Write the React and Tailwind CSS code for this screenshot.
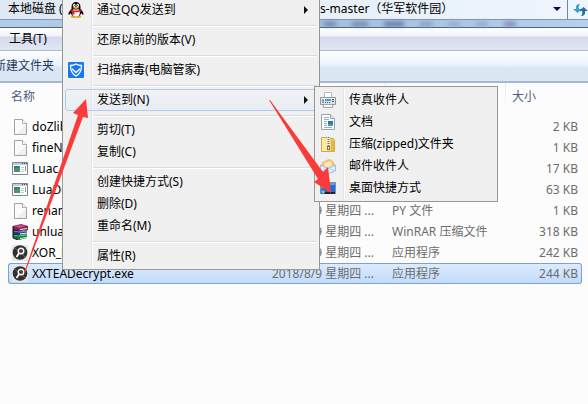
import React from 'react';

const files = [
  { name: 'doZlib', icon: 'blank', type: '文件', size: '2 KB' },
  { name: 'fineN', icon: 'blank', type: '文件', size: '1 KB' },
  { name: 'Luac', icon: 'window', type: '应用程序', size: '17 KB' },
  { name: 'LuaDec', icon: 'window', type: '应用程序', size: '63 KB' },
  { name: 'renam', icon: 'blank', type: 'PY 文件', size: '1 KB' },
  { name: 'unluac', icon: 'rar', type: 'WinRAR 压缩文件', size: '318 KB' },
  { name: 'XOR_D', icon: 'app', type: '应用程序', size: '242 KB' },
  { name: 'XXTEADecrypt.exe', icon: 'app', type: '应用程序', size: '244 KB', selected: true },
];

const menuGroups = [
  [{ label: '通过QQ发送到', icon: 'qq', sub: true }],
  [{ label: '还原以前的版本(V)' }],
  [{ label: '扫描病毒(电脑管家)', icon: 'shield' }],
  [{ label: '发送到(N)', sub: true, active: true }],
  [{ label: '剪切(T)' }, { label: '复制(C)' }],
  [{ label: '创建快捷方式(S)' }, { label: '删除(D)' }, { label: '重命名(M)' }],
  [{ label: '属性(R)' }],
];

const sendTo = [
  { label: '传真收件人', icon: 'fax' },
  { label: '文档', icon: 'doc' },
  { label: '压缩(zipped)文件夹', icon: 'zip' },
  { label: '邮件收件人', icon: 'mail' },
  { label: '桌面快捷方式', icon: 'desktop' },
];

const drawings = {
  blank: (
    <>
      <path d="M2.500 .5h8l4 4v11h-12z" fill="#fbfbfb" stroke="#a3a3a3" />
      <path d="M4 15h10V6z" fill="#efefef" />
      <path d="M10.500 .5v4h4" fill="#fff" stroke="#ababab" />
    </>
  ),
  window: (
    <>
      <path d="M.5 1.500h15v12H.5z" fill="#fff" stroke="#81878f" />
      <path d="M1 2h14v2H1z" fill="#c3ccd7" />
      <path d="M10 2h1v1h-1zM12 2h1v1h-1zM14 2h1v1h-1z" fill="#465060" />
      <path d="M2 5h6v6H2z" fill="#3f6f9a" />
      <path d="M2 8l6-2v5H2z" fill="#459866" />
      <path d="M9 6.500h3M9 8.500h3M9 10.500h3" stroke="#c3c9d0" />
      <path d="M13.500 5v5" stroke="#8d959e" />
    </>
  ),
  rar: (
    <>
      <path d="M1 2l8-2 7 2v4l-8 1-7-1z" fill="#8e1e53" />
      <path d="M2 2l7-1 5 1-7 2z" fill="#c25689" />
      <path d="M1 6l7 1 7-1v4l-7 1-7-1z" fill="#1c3d92" />
      <path d="M2 7l6 1 7-1" stroke="#6fa5df" fill="none" />
      <path d="M1 10l7 1 7-1v4l-8 2-6-2z" fill="#0e7647" />
      <path d="M2 11l6 1 7-1" stroke="#6acb8d" fill="none" />
      <path d="M8 5l7-1v1l-7 1zM8 9.500l7-1v1l-7 1zM8 14l7-1v1l-7 1z" fill="#f2eedc" />
      <path d="M1 2v12l5 2M1 6l6 1M1 10l6 1" stroke="#171717" fill="none" />
    </>
  ),
  app: (
    <>
      <path d="M0 0h16v16H0z" fill="#e8e8e8" />
      <circle cx="8" cy="7.500" r="7.300" fill="#303030" />
      <path d="M3 3l3 3M13 12l-3-3" stroke="#666" />
      <circle cx="9" cy="6" r="2.800" fill="#454545" stroke="#f8f8f8" strokeWidth="1.400" />
      <path d="M7 8.200L4.500 12" stroke="#fff" strokeWidth="1.800" />
    </>
  ),
  qq: (
    <>
      <ellipse cx="8" cy="14.500" rx="5.500" ry="1.500" fill="#efb42d" />
      <path d="M4 7C0 10 0 12 1 13l2-2M12 7c4 3 4 5 3 6l-2-2" fill="#111" />
      <ellipse cx="8" cy="9.500" rx="5.500" ry="5.300" fill="#111" />
      <ellipse cx="8" cy="10.500" rx="3.800" ry="4.200" fill="#fff" />
      <path d="M3.500 6C3-2 13-2 12.500 6c-1 2-8 2-9 0z" fill="#111" />
      <ellipse cx="6.300" cy="3.400" rx="1.300" ry="1.600" fill="#fff" />
      <ellipse cx="9.700" cy="3.400" rx="1.300" ry="1.600" fill="#fff" />
      <path d="M6.500 3h.8v1h-.8zM9 3h.8v1H9z" fill="#111" />
      <ellipse cx="8" cy="5.800" rx="2.800" ry="1" fill="#f3b52c" />
      <path d="M2.500 7c3 2 8 2 11 0v2c-3 1.500-5 1.500-7 1v2.500H4V9.500l-1.500-.7z" fill="#e81e2b" />
    </>
  ),
  shield: (
    <>
      <rect width="16" height="16" rx="1" fill="#1878f2" />
      <path d="M8 2c2 1.200 4 1.500 5.500 1.500C13.500 9 12 12 8 14 4 12 2.500 9 2.500 3.500 4 3.500 6 3.200 8 2z" fill="none" stroke="#fff" strokeWidth="1.300" />
      <path d="M4 6l4 3.500L12 6v1.700L8 11.500 4 7.700z" fill="#fff" />
    </>
  ),
  fax: (
    <>
      <path d="M4.500 .5h7V6h-7z" fill="#fff" stroke="#b5bbc1" />
      <path d="M.5 5.500h15v7H.5z" fill="#dbe2e8" stroke="#8d969e" />
      <path d="M1 6h14v1H1z" fill="#f5f8fa" />
      <path d="M2 7h2v4H2z" fill="#8f9aa4" />
      <path d="M5 7h6v2H5z" fill="#3c9fd8" />
      <path d="M12 7h2v1h-2zM12 9h2v1h-2zM5 10h1v1H5zM7 10h1v1H7zM9 10h1v1H9z" fill="#435462" />
      <path d="M3.500 12.500h9v3h-9z" fill="#fff" stroke="#9aa1a8" />
    </>
  ),
  doc: (
    <>
      <path d="M1.500 .5h9l4 4v11h-13z" fill="#fff" stroke="#9aa5af" />
      <path d="M10.500 .5v4h4" fill="#e2ebf1" stroke="#9aa5af" />
      <path d="M4 3.500h5M4 5.500h5M4 7.500h3M4 9.500h3M4 11.500h3M4 13.500h8" stroke="#8fb0c6" />
      <path d="M8 7h5v5H8z" fill="#2b78b8" />
      <path d="M8 10h5v2H8z" fill="#4d9c8e" />
    </>
  ),
  zip: (
    <>
      <path d="M1.500 1.500h6l1 1h5l1 2v11h-13z" fill="#f3d777" stroke="#cfa94a" />
      <path d="M2 2h5v13H2z" fill="#fae9a4" />
      <path d="M11 3l3 2v10h-3z" fill="#e3b94a" />
      <path d="M8.500 1v10" stroke="#fff6cf" strokeWidth="3" />
      <path d="M8.500 1v10" stroke="#77705c" strokeWidth="2" strokeDasharray="1 1" />
      <path d="M7 10h3v4H7z" fill="#7a7566" />
      <path d="M8 11h1v2H8z" fill="#f5eed6" />
    </>
  ),
  mail: (
    <>
      <path d="M1 6l7-5 7 5v8l-7 2-7-2z" fill="#b8d8ee" />
      <path d="M2 4l8-3 4 3v4l-6 3-6-3z" fill="#f5be6c" />
      <path d="M4 5l7-2 1 2v3l-4 2-4-2z" fill="#ffe7b4" />
      <path d="M.5 7L8 10.500 15.500 7v6L8 15.500.5 13z" fill="#dcefff" stroke="#9cc3dc" />
      <path d="M1 13l7-3 7 3" fill="none" stroke="#b5d4e9" />
    </>
  ),
  desktop: (
    <>
      <path d="M.5 2.500h15v11H.5z" fill="#2a6bd0" stroke="#7b8ea8" />
      <path d="M1 3h14v2C10 5 6 7 1 9z" fill="#5b9bea" />
      <path d="M1 12h14v2H1z" fill="#192638" />
      <circle cx="3" cy="12" r="2" fill="#4fa5df" />
      <path d="M2 12h2" stroke="#ebdd61" />
    </>
  ),
};

const Icon = ({ name }) => (
  <svg viewBox="0 0 16 16" className="w-4 h-4 shrink-0" aria-hidden="true">
    {drawings[name]}
  </svg>
);

const MenuItem = ({ item }) => (
  <button
    type="button"
    role="menuitem"
    className={`relative flex items-center gap-[13px] w-full h-[22px] text-left whitespace-nowrap ${
      item.active
        ? 'rounded-[3px] border border-[#aeccf0] bg-linear-to-b from-[#f0f2f5]/60 to-[#e4ebf6]/60 pl-[2px] pr-2'
        : 'pl-[3px] pr-[9px]'
    }`}
  >
    <span className="flex w-4 shrink-0">{item.icon && <Icon name={item.icon} />}</span>
    <span className="flex-1">{item.label}</span>
    {item.sub && (
      <svg viewBox="0 0 4 8" className="w-1 h-2" aria-hidden="true">
        <path d="M0 0l4 4-4 4z" fill="#111" />
      </svg>
    )}
  </button>
);

const ContextMenu = () => (
  <div role="menu" className="absolute -top-1 left-[62px] w-[258px] border border-[#979797] bg-[#f0f0f0] p-[2px]">
    <div className="absolute inset-y-[2px] left-[28px] w-[2px] border-l border-[#e2e3e3] bg-white" />
    {menuGroups.map((group, i) => (
      <React.Fragment key={i}>
        {i > 0 && (
          <div role="separator" className="h-2 pt-1 pl-[28px]">
            <div className="h-[2px] border-t border-[#dcdcdc] bg-white" />
          </div>
        )}
        {group.map((item) => (
          <MenuItem key={item.label} item={item} />
        ))}
      </React.Fragment>
    ))}
  </div>
);

const SendToMenu = () => (
  <div role="menu" className="absolute top-[86px] left-[314px] w-[184px] border border-[#979797] bg-[#f0f0f0] p-[2px]">
    <div className="absolute inset-y-[2px] left-[28px] w-[2px] border-l border-[#e2e3e3] bg-white" />
    {sendTo.map((item) => (
      <MenuItem key={item.label} item={item} />
    ))}
  </div>
);

const TopBar = () => (
  <header className="h-7 border-b border-[#53657c] bg-linear-to-r from-[#b1cfea] via-[#9fbddc] to-[#b4d1ef]">
    <div className="flex h-5 border-b border-[#8696a9] bg-linear-to-r from-[#dfe9f5] to-[#eef5fd]">
      <div className="flex flex-1 items-center pb-[2px] pl-2 whitespace-nowrap">
        <span className="w-[312px] shrink-0">本地磁盘 (</span>
        <span className="flex-1">s-master（华军软件园）</span>
        <button type="button" aria-label="地址" className="px-[6px]">
          <svg viewBox="0 0 8 4" className="w-2 h-1">
            <path d="M0 0h8L4 4z" fill="#08085c" />
          </svg>
        </button>
      </div>
      <button type="button" aria-label="刷新" className="flex w-[21px] items-center justify-end border-l border-[#75869b]">
        <svg viewBox="0 0 15 14" className="w-[15px] h-[14px]">
          <path d="M7 1C4 1 2.500 2.500 3 6H0l4.500 4L9 6H6C5.500 4 5.500 2.500 7 1z" fill="#38a0d8" />
          <path d="M8 13c3 0 4.500-1.500 4-5h3l-4.500-4L6 8h3c.5 2 .5 3.500-1 5z" fill="#296da9" />
        </svg>
      </button>
    </div>
    <div className="flex h-[7px] items-center gap-4 overflow-hidden pl-[324px] blur-[2px]">
      <span className="h-1 w-3 bg-[#667f9e]" />
      <span className="h-1 w-4 bg-[#6882a6]" />
      <span className="h-1 w-5 bg-[#576f99]" />
      <span className="h-1 w-3 bg-[#7e98bb]" />
      <span className="h-1 w-3 bg-[#8ea5ca]" />
      <span className="h-1 w-3 bg-[#8ea5ca]" />
      <span className="h-1 w-3 bg-[#7c7fb5]" />
    </div>
  </header>
);

const cell = 'h-[21px] p-0 border-y truncate';

const FileTable = () => (
  <div className="pl-2 pr-[6px]">
    <table className="w-full table-fixed border-separate border-spacing-0">
      <colgroup>
        <col />
        <col className="w-[120px]" />
        <col className="w-[120px]" />
        <col className="w-[77px]" />
      </colgroup>
      <thead>
        <tr className="text-left text-[#4c607a]">
          <th className="h-[33px] p-0 pb-[5px] pl-[3px] font-normal">名称</th>
          <th className="p-0 pb-[5px] pl-[7px] font-normal">修改日期</th>
          <th className="bg-[linear-gradient(#dce8f4,#fcfcfc)] bg-[length:1px_26px] bg-no-repeat p-0 pb-[5px] pl-[7px] font-normal">类型</th>
          <th className="bg-[linear-gradient(#dce8f4,#fcfcfc)] bg-[length:1px_26px] bg-no-repeat p-0 pb-[5px] pl-[7px] font-normal">大小</th>
        </tr>
      </thead>
      <tbody>
        {files.map((file) => {
          const tone = file.selected
            ? 'border-[#7da2ce] bg-linear-to-b from-[#dcebfc] to-[#c1dbfc]'
            : 'border-transparent';
          return (
            <tr key={file.name} className="text-[#6d6d6d]">
              <td className={`${cell} ${tone} border-l pl-[3px] text-black ${file.selected ? 'rounded-l-[3px]' : ''}`}>
                <span className="flex items-center gap-1">
                  <Icon name={file.icon} />
                  {file.name}
                </span>
              </td>
              <td className={`${cell} ${tone} pl-[7px]`}>2018/8/9 星期四 ...</td>
              <td className={`${cell} ${tone} pl-[7px]`}>{file.type}</td>
              <td className={`${cell} ${tone} border-r pr-[3px] text-right ${file.selected ? 'rounded-r-[3px]' : ''}`}>
                {file.size}
              </td>
            </tr>
          );
        })}
      </tbody>
    </table>
  </div>
);

const Arrows = () => (
  <svg viewBox="0 0 340 280" className="pointer-events-none absolute top-0 left-0 h-[280px] w-[340px]" aria-hidden="true">
    <path d="M86 99L73 113l5 2L24 273h1L83 117l5 1z" fill="#fb3b39" />
    <path d="M269 100L318 179l-4 3 17 11-3-26-5 5-53-72z" fill="#fb3b39" />
  </svg>
);

export default function App() {
  return (
    <div className="relative min-h-screen overflow-hidden bg-[#fcfcfc] font-['Noto_Sans','Noto_Sans_CJK_SC',sans-serif] text-[12px] leading-[18px] text-black">
      <TopBar />
      <nav className="flex h-[23px] items-center border-b border-[#b3bad0] bg-[linear-gradient(#ffffff,#f0f3fa_8px,#d4d9eb_9px,#e2e7f4)] pl-[9px]">
        <button type="button">工具(T)</button>
      </nav>
      <div className="flex h-8 items-center border-b-2 border-[#a6b7d0] bg-[linear-gradient(#fcfeff,#e9f2fb_15px,#dce6f4_16px,#dce7f5)] text-[#1e395b]">
        <button type="button" className="-ml-[6px] whitespace-nowrap">新建文件夹</button>
      </div>
      <FileTable />
      <ContextMenu />
      <SendToMenu />
      <Arrows />
    </div>
  );
}
